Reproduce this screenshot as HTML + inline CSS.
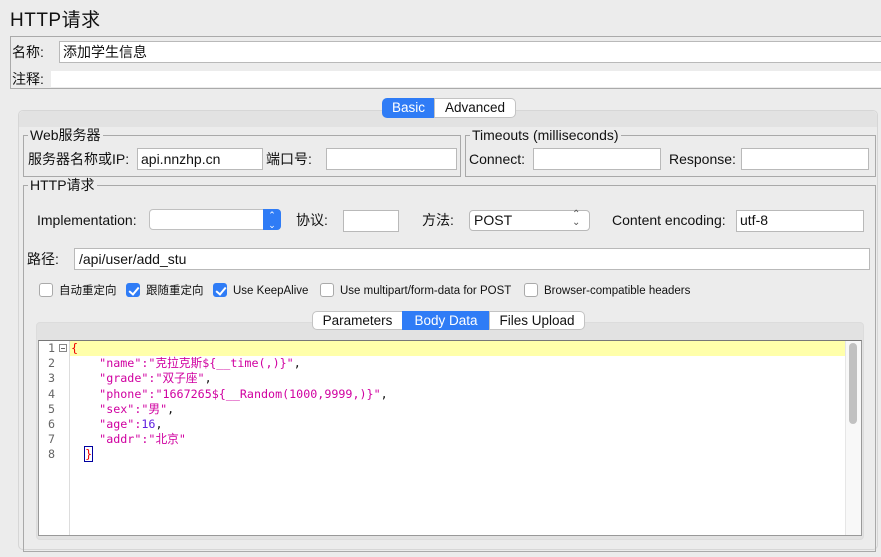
<!DOCTYPE html>
<html><head><meta charset="utf-8"><style>
*{box-sizing:border-box;margin:0;padding:0}
html,body{width:881px;height:557px;overflow:hidden}
body{background:#ececec;font-family:"Liberation Sans","Noto Sans CJK SC",sans-serif;font-size:14px;color:#111;position:relative}
.a{position:absolute;white-space:nowrap;line-height:16px;height:16px}
.in{position:absolute;background:#fff;border:1px solid #b9b9b9}
.fs{position:absolute;border:1px solid #a9a9a9}
.lg{position:absolute;background:#ececec;padding:0 2px;top:-9px;left:4px;font-size:14px;line-height:16px;height:16px}
.cb{position:absolute;width:14px;height:14px;border:1px solid #aaa;border-radius:3px;background:#fff}
.cb.on{background:#2f7cf6;border-color:#2f7cf6}
.cb.on:after{content:"";position:absolute;left:4px;top:1px;width:4px;height:8px;border:solid #fff;border-width:0 2px 2px 0;transform:rotate(40deg)}
.tab{position:absolute;height:19px;border:1px solid #c3c3c3;background:#fff;text-align:center;line-height:17px;font-size:13.5px}
.tab.on{background:#2f7cf6;border-color:#2f7cf6;color:#fff}
.code{font-family:"DejaVu Sans Mono","Noto Sans CJK SC",monospace;font-size:11.7px;line-height:15.2px;height:auto}
.s{color:#d000a0}
.sm{font-size:11.5px}
</style></head><body>
<div class="a" style="left:10px;top:10px;font-size:19px;line-height:22px;height:22px;letter-spacing:0.5px">HTTP请求</div>
<div class="fs" style="left:10px;top:36px;width:880px;height:53px;border-color:#aaa"></div>
<div class="a" style="left:12px;top:44px">名称:</div>
<div class="in" style="left:59px;top:41px;width:830px;height:22px"></div>
<div class="a" style="left:63px;top:44px">添加学生信息</div>
<div class="a" style="left:12px;top:71px">注释:</div>
<div style="position:absolute;left:51px;top:71px;width:840px;height:16px;background:#fff"></div>

<div style="position:absolute;left:18px;top:110px;width:860px;height:440px;border:1px solid #d6d6d6;border-radius:5px;background:#ececec"></div>
<div style="position:absolute;left:19px;top:111px;width:858px;height:16px;background:#e2e2e2;border-radius:5px 5px 0 0"></div>
<div class="tab on" style="left:382px;top:98px;width:53px;border-radius:5px 0 0 5px;height:20px">Basic</div>
<div class="tab" style="left:434px;top:98px;width:82px;border-radius:0 5px 5px 0;height:20px">Advanced</div>

<div class="fs" style="left:23px;top:135px;width:438px;height:42px"><span class="lg">Web服务器</span></div>
<div class="a" style="left:28px;top:151px">服务器名称或IP:</div>
<div class="in" style="left:137px;top:148px;width:126px;height:22px"></div>
<div class="a" style="left:141px;top:151px">api.nnzhp.cn</div>
<div class="a" style="left:266px;top:151px">端口号:</div>
<div class="in" style="left:326px;top:148px;width:131px;height:22px"></div>

<div class="fs" style="left:465px;top:135px;width:411px;height:42px"><span class="lg">Timeouts (milliseconds)</span></div>
<div class="a" style="left:469px;top:151px">Connect:</div>
<div class="in" style="left:533px;top:148px;width:128px;height:22px"></div>
<div class="a" style="left:669px;top:151px">Response:</div>
<div class="in" style="left:741px;top:148px;width:128px;height:22px"></div>

<div class="fs" style="left:23px;top:185px;width:853px;height:367px"><span class="lg">HTTP请求</span></div>
<div class="a" style="left:37px;top:212px">Implementation:</div>
<div class="in" style="left:149px;top:209px;width:132px;height:21px;border-radius:4px;border-color:#c0c0c0"></div>
<div style="position:absolute;left:263px;top:209px;width:18px;height:21px;background:#2f7cf6;border-radius:0 4px 4px 0;color:#fff;font-size:9px;text-align:center;line-height:10px;padding-top:1px">⌃<br>⌄</div>
<div class="a" style="left:296px;top:212px">协议:</div>
<div class="in" style="left:343px;top:210px;width:56px;height:22px"></div>
<div class="a" style="left:422px;top:212px">方法:</div>
<div class="in" style="left:469px;top:210px;width:121px;height:21px;border-radius:4px"></div>
<div class="a" style="left:474px;top:212px">POST</div>
<div class="a" style="left:572px;top:211px;font-size:10px;line-height:8px;color:#555">⌃<br>⌄</div>
<div class="a" style="left:612px;top:212px">Content encoding:</div>
<div class="in" style="left:736px;top:210px;width:128px;height:22px"></div>
<div class="a" style="left:740px;top:212px">utf-8</div>

<div class="a" style="left:27px;top:251px">路径:</div>
<div class="in" style="left:74px;top:248px;width:796px;height:22px"></div>
<div class="a" style="left:79px;top:251px">/api/user/add_stu</div>

<div class="cb" style="left:39px;top:283px"></div><div class="a sm" style="left:59px;top:283px">自动重定向</div>
<div class="cb on" style="left:126px;top:283px"></div><div class="a sm" style="left:146px;top:283px">跟随重定向</div>
<div class="cb on" style="left:213px;top:283px"></div><div class="a sm" style="left:233px;top:283px">Use KeepAlive</div>
<div class="cb" style="left:320px;top:283px"></div><div class="a sm" style="left:340px;top:283px">Use multipart/form-data for POST</div>
<div class="cb" style="left:524px;top:283px"></div><div class="a sm" style="left:544px;top:283px">Browser-compatible headers</div>

<div style="position:absolute;left:36px;top:322px;width:828px;height:218px;background:#e2e2e2;border:1px solid #dcdcdc;border-radius:4px"></div>
<div class="tab" style="left:312px;top:311px;width:91px;border-radius:5px 0 0 5px">Parameters</div>
<div class="tab on" style="left:402px;top:311px;width:88px">Body Data</div>
<div class="tab" style="left:489px;top:311px;width:96px;border-radius:0 5px 5px 0">Files Upload</div>

<div style="position:absolute;left:38px;top:340px;width:824px;height:196px;background:#fff;border:1px solid #999;border-top-color:#777"></div>
<div style="position:absolute;left:69px;top:341px;width:1px;height:194px;background:#ddd"></div>
<div style="position:absolute;left:70px;top:341px;width:775px;height:15px;background:#ffffaa"></div>
<div style="position:absolute;left:845px;top:341px;width:16px;height:194px;background:#f8f8f8;border-left:1px solid #e6e6e6"></div>
<div style="position:absolute;left:849px;top:343px;width:8px;height:81px;background:#c1c1c1;border-radius:4px"></div>
<div class="a code" style="left:48px;top:341px;color:#666;text-align:right">1<br>2<br>3<br>4<br>5<br>6<br>7<br>8</div>
<div style="position:absolute;left:59px;top:344px;width:8px;height:8px;border:1px solid #888;font-size:0"><div style="margin:3px 1px;height:1px;background:#666"></div></div>
<div class="a code" style="left:71px;top:341px"><span style="color:#e00">{</span><br>
&nbsp;&nbsp;&nbsp;&nbsp;<span class="s">"name":"克拉克斯${__time(,)}"</span>,<br>
&nbsp;&nbsp;&nbsp;&nbsp;<span class="s">"grade":"双子座"</span>,<br>
&nbsp;&nbsp;&nbsp;&nbsp;<span class="s">"phone":"1667265${__Random(1000,9999,)}"</span>,<br>
&nbsp;&nbsp;&nbsp;&nbsp;<span class="s">"sex":"男"</span>,<br>
&nbsp;&nbsp;&nbsp;&nbsp;<span class="s">"age":</span><span style="color:#6020e0">16</span>,<br>
&nbsp;&nbsp;&nbsp;&nbsp;<span class="s">"addr":"北京"</span><br>
&nbsp;&nbsp;<span style="color:#e00;outline:1px solid #0000a0">}</span></div>
</body></html>
